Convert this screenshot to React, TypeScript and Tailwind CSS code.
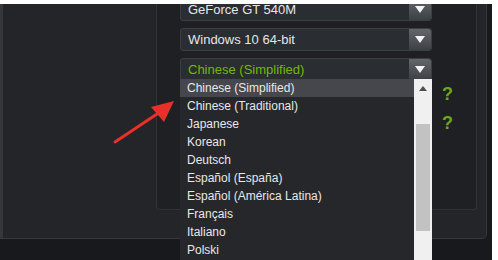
import React from "react";

const languages = [
  "Chinese (Simplified)",
  "Chinese (Traditional)",
  "Japanese",
  "Korean",
  "Deutsch",
  "Español (España)",
  "Español (América Latina)",
  "Français",
  "Italiano",
  "Polski",
];

function Caret() {
  return (
    <div className="w-[22px] h-full flex items-center justify-center bg-gradient-to-b from-[#63666b] to-[#3d4044] rounded-r-[3px]">
      <svg width="10" height="7" viewBox="0 0 10 7">
        <path d="M0 0 H10 L5 7 Z" fill="#f2f2f2" />
      </svg>
    </div>
  );
}

function Select({ label, green }: { label: string; green?: boolean }) {
  return (
    <div className="h-[23px] w-[252px] flex items-stretch bg-[#2a2d31] border border-[#3b3e43] rounded-[3px]">
      <div
        className={`flex-1 flex items-center pl-[7px] text-[13px] ${green ? "text-[#76b900]" : "text-[#e6e6e6]"}`}
      >
        {label}
      </div>
      <Caret />
    </div>
  );
}

export default function App() {
  return (
    <div
      className="w-[498px] h-[260px] bg-white flex flex-col pt-[4px] overflow-hidden relative"
      style={{ fontFamily: '"Liberation Sans", Arial, sans-serif' }}
    >
      <div className="w-[492px] flex-1 flex flex-col bg-[#17191c]">
        {/* outer panel */}
        <div className="h-[235px] w-[487px] flex bg-[#232529] border-r border-b border-[#35383c] rounded-br-[5px]">
          <div className="w-[3px] bg-[#34373c]" />
          <div className="w-[153px]" />
          {/* inner panel */}
          <div className="w-[321px] h-[206px] bg-[#1e2023] border-l border-r border-b border-[#303337] rounded-b-[4px] overflow-hidden flex pl-[23px]">
            <div className="flex flex-col gap-[7px] -mt-[6px]">
              <Select label="GeForce GT 540M" />
              <Select label="Windows 10 64-bit" />
              <Select label="Chinese (Simplified)" green />
            </div>
            <div className="flex flex-col pl-[10px] pt-[81px] gap-[11px] text-[18px] font-bold text-[#6fa61c] leading-[18px]">
              <span>?</span>
              <span>?</span>
            </div>
          </div>
        </div>
      </div>

      {/* open dropdown list */}
      <div className="absolute left-[180px] top-[79px] w-[252px] h-[190px] flex bg-[#25272b]">
        <div className="flex-1 flex flex-col">
          {languages.map((l, i) => (
            <div
              key={l}
              className={`h-[18px] flex items-center pl-[7px] text-[12px] text-[#e8e8e8] ${i === 0 ? "bg-[#45474c]" : ""}`}
            >
              {l}
            </div>
          ))}
        </div>
        <div className="w-[18px] bg-[#f0f0f0] flex flex-col items-center">
          <svg width="8" height="5" viewBox="0 0 8 5" className="mt-[7px]">
            <path d="M0 5 L4 0 L8 5 Z" fill="#505050" />
          </svg>
          <div className="mt-[33px] w-[14px] h-[107px] bg-[#c2c2c2]" />
        </div>
      </div>

      {/* red annotation arrow */}
      <svg className="absolute left-[110px] top-[95px]" width="70" height="52" viewBox="0 0 70 52">
        <path d="M5 47 L50 17" stroke="#e8302a" strokeWidth="3" strokeLinecap="round" />
        <path d="M64 6 L41 12 L54 27 Z" fill="#e8302a" />
      </svg>
    </div>
  );
}
